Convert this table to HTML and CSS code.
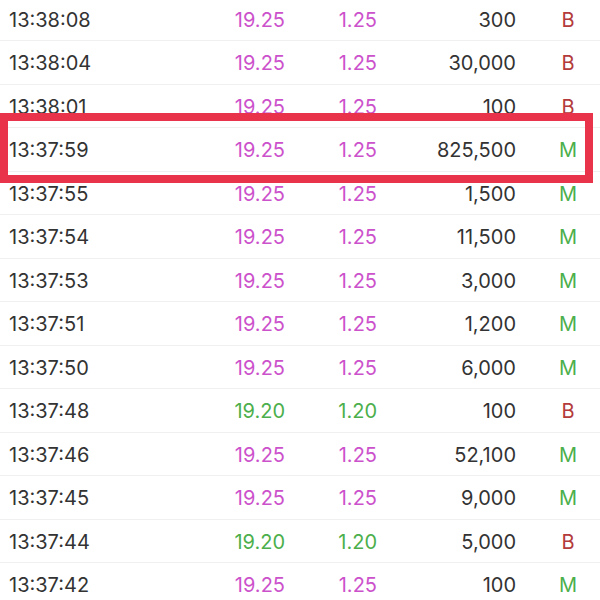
FILE: index.html
```html
<!DOCTYPE html>
<html>
<head>
<meta charset="utf-8">
<link rel="stylesheet" href="styles.css">
</head>
<body>
<div class="page">
  <div class="list">
    <div class="row"><span class="time">13:38:08</span><span class="num up">19.25</span><span class="num up">1.25</span><span class="num vol">300</span><span class="side buy">B</span></div>
    <div class="row"><span class="time">13:38:04</span><span class="num up">19.25</span><span class="num up">1.25</span><span class="num vol">30,000</span><span class="side buy">B</span></div>
    <div class="row"><span class="time">13:38:01</span><span class="num up">19.25</span><span class="num up">1.25</span><span class="num vol">100</span><span class="side buy">B</span></div>
    <div class="row"><span class="time">13:37:59</span><span class="num up">19.25</span><span class="num up">1.25</span><span class="num vol">825,500</span><span class="side mid">M</span></div>
    <div class="row"><span class="time">13:37:55</span><span class="num up">19.25</span><span class="num up">1.25</span><span class="num vol">1,500</span><span class="side mid">M</span></div>
    <div class="row"><span class="time">13:37:54</span><span class="num up">19.25</span><span class="num up">1.25</span><span class="num vol">11,500</span><span class="side mid">M</span></div>
    <div class="row"><span class="time">13:37:53</span><span class="num up">19.25</span><span class="num up">1.25</span><span class="num vol">3,000</span><span class="side mid">M</span></div>
    <div class="row"><span class="time">13:37:51</span><span class="num up">19.25</span><span class="num up">1.25</span><span class="num vol">1,200</span><span class="side mid">M</span></div>
    <div class="row"><span class="time">13:37:50</span><span class="num up">19.25</span><span class="num up">1.25</span><span class="num vol">6,000</span><span class="side mid">M</span></div>
    <div class="row"><span class="time">13:37:48</span><span class="num down">19.20</span><span class="num down">1.20</span><span class="num vol">100</span><span class="side buy">B</span></div>
    <div class="row"><span class="time">13:37:46</span><span class="num up">19.25</span><span class="num up">1.25</span><span class="num vol">52,100</span><span class="side mid">M</span></div>
    <div class="row"><span class="time">13:37:45</span><span class="num up">19.25</span><span class="num up">1.25</span><span class="num vol">9,000</span><span class="side mid">M</span></div>
    <div class="row"><span class="time">13:37:44</span><span class="num down">19.20</span><span class="num down">1.20</span><span class="num vol">5,000</span><span class="side buy">B</span></div>
    <div class="row"><span class="time">13:37:42</span><span class="num up">19.25</span><span class="num up">1.25</span><span class="num vol">100</span><span class="side mid">M</span></div>
  </div>
  <div class="highlight"></div>
</div>
</body>
</html>
```

FILE: styles.css
```css
html, body {
  margin: 0;
  padding: 0;
  background: #ffffff;
}

.page {
  position: relative;
  width: 600px;
  height: 600px;
  overflow: hidden;
  font-family: Inter, "Liberation Sans", sans-serif;
  font-size: 20px;
  color: #333333;
}

.list {
  margin-top: -2.5px;
}

.row {
  display: grid;
  grid-template-columns: 200px 76px 92px 139px 1fr;
  align-items: center;
  height: 43.5px;
  box-sizing: border-box;
  padding-left: 9px;
  padding-top: 2px;
  border-bottom: 1px solid #f0f0f0;
}

.time {
  text-align: left;
}

.num {
  text-align: right;
}

.up {
  color: #cc52cc;
}

.down {
  color: #4caf4c;
}

.side {
  text-align: center;
  padding-left: 20px;
}

.buy {
  color: #b33b3b;
}

.mid {
  color: #4caf4c;
}

.highlight {
  position: absolute;
  left: 0;
  top: 113px;
  width: 593px;
  height: 70px;
  box-sizing: border-box;
  border: 8px solid #e8334a;
}
```
